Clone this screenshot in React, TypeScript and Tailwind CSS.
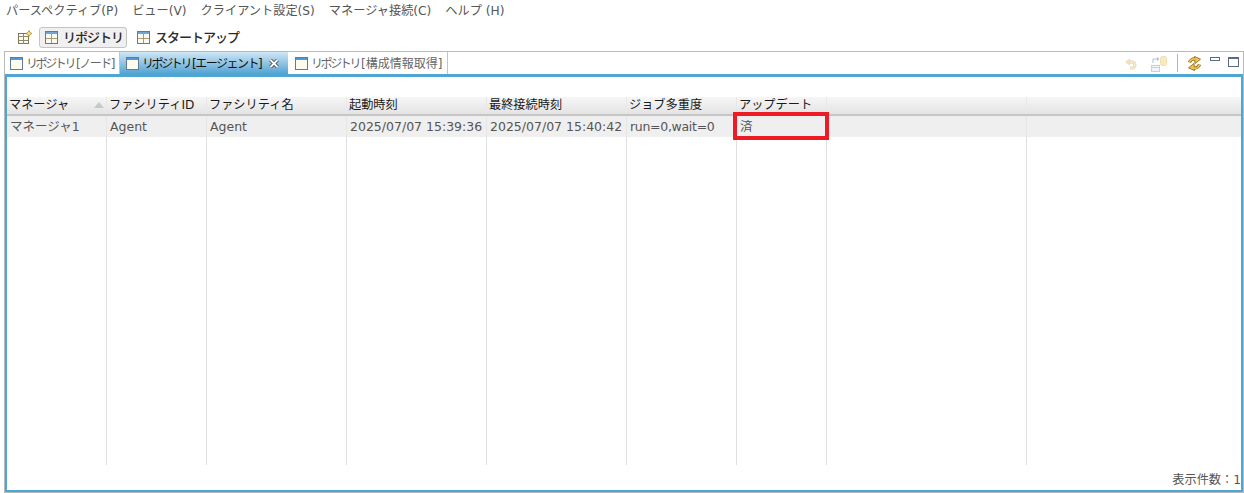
import React from "react";

const font = { fontFamily: '"DejaVu Sans","Noto Sans CJK JP",sans-serif' };

function WinIcon() {
  return (
    <svg width="13" height="13" viewBox="0 0 13 13" className="shrink-0">
      <rect x="0.5" y="0.5" width="12" height="12" fill="#fdfbee" stroke="#5f7a9e" />
      <rect x="1" y="1" width="11" height="2" fill="#4f9ad6" />
    </svg>
  );
}

function GridIcon() {
  return (
    <svg width="13" height="13" viewBox="0 0 13 13" className="shrink-0">
      <rect x="0.5" y="0.5" width="12" height="12" fill="#fbfaf2" stroke="#5b7ba3" />
      <rect x="1" y="1" width="11" height="2" fill="#6fa5d8" />
      <path d="M6.500 3v9M1 7.500h11" stroke="#a89a7c" />
    </svg>
  );
}

function NewPerspective() {
  return (
    <svg width="15" height="15" viewBox="0 0 15 15" className="shrink-0">
      <rect x="0.5" y="3.500" width="10" height="10" fill="#fbf8ec" stroke="#7f7558" />
      <path d="M0.500 6.500h10M0.500 10.500h10M5.500 4v10" stroke="#8f8a72" />
      <path d="M11 0.500l1 2 2 1-2 1-1 2-1-2-2-1 2-1z" fill="#fbe58c" stroke="#b98c20" strokeWidth="0.8" />
    </svg>
  );
}

function Undo() {
  return (
    <svg width="12" height="11" viewBox="0 0 12 11" className="shrink-0 mt-[2px]">
      <path d="M3 3h4a3 3 0 0 1 0 6H5" fill="none" stroke="#e6d3ae" strokeWidth="3" />
      <path d="M3 3h4a3 3 0 0 1 0 6H5" fill="none" stroke="#f8ead0" strokeWidth="1.400" />
      <path d="M0.500 3L4.500 0v6z" fill="#f4e2c0" stroke="#e6d3ae" strokeWidth="0.6" />
    </svg>
  );
}

function DbSwap() {
  return (
    <svg width="16" height="16" viewBox="0 0 16 16" className="shrink-0 mt-[1px]">
      <rect x="9.500" y="0.500" width="6" height="9" rx="2" fill="#fbe9ba" stroke="#eedfb5" />
      <rect x="0.500" y="9.500" width="8" height="6" fill="#f1f5fa" stroke="#c3d2e3" />
      <path d="M1 11.500h7" stroke="#c3d2e3" />
      <path d="M2 7V3h5" fill="none" stroke="#a9c1dc" />
      <path d="M6 1l2.500 2L6 5z" fill="#a9c1dc" />
    </svg>
  );
}

function SyncArrow({ r }: { r?: boolean }) {
  return (
    <g transform={r ? "rotate(180 7.500 7.500)" : undefined}>
      <path d="M2.500 6.500A5 5 0 0 1 8 3" fill="none" stroke="#8f6a1a" strokeWidth="3.200" />
      <path d="M7.500 0.500L13.500 3.200L8 7.500Z" fill="#f6c453" stroke="#8f6a1a" strokeWidth="0.9" strokeLinejoin="round" />
      <path d="M2.500 6.500A5 5 0 0 1 8.500 3" fill="none" stroke="#f6c453" strokeWidth="1.700" />
    </g>
  );
}

function Sync() {
  return (
    <svg width="15" height="15" viewBox="0 0 15 15" className="shrink-0">
      <SyncArrow />
      <SyncArrow r />
    </svg>
  );
}

function Kana({ children, t }: { children: React.ReactNode; t: string }) {
  return <span className={t}>{children}</span>;
}

const cols = [
  { w: "w-[100px]", h: "マネージャ", v: "マネージャ1", sort: true, t: "" },
  { w: "w-[100px]", h: "ファシリティID", v: "Agent", t: "" },
  { w: "w-[140px]", h: "ファシリティ名", v: "Agent", t: "" },
  { w: "w-[140px]", h: "起動時刻", v: "2025/07/07 15:39:36", t: "" },
  { w: "w-[140px]", h: "最終接続時刻", v: "2025/07/07 15:40:42", t: "" },
  { w: "w-[110px]", h: "ジョブ多重度", v: "run=0,wait=0", t: "tracking-[-0.3px]" },
  { w: "w-[90px]", h: "アップデート", v: "済", t: "" },
  { w: "w-[200px]", h: "", v: "", t: "" },
];

function Column({ c }: { c: (typeof cols)[number] }) {
  return (
    <div className={`${c.w} shrink-0 flex flex-col`}>
      <div className="h-[17px] shrink-0 pl-[2px] flex items-center relative bg-gradient-to-b from-[#f6f6f6] to-[#e4e4e4] border-r border-[#e8e8e8] text-[12.2px] text-[#1a1a1a] whitespace-nowrap overflow-hidden">
        {c.h}
        {c.sort && (
          <span className="absolute right-[2px] top-[5px] w-0 h-0 border-l-[5px] border-r-[5px] border-b-[6px] border-l-transparent border-r-transparent border-b-[#c8c8c8]" />
        )}
      </div>
      <div className="h-[2px] shrink-0 bg-[#c6c6c6]" />
      <div className={`h-[21px] shrink-0 pl-[3px] pt-[2px] flex items-center bg-[#efefef] border-r border-[#e6e6e6] text-[12.5px] text-[#555555] whitespace-nowrap overflow-hidden ${c.t}`}>
        {c.v}
      </div>
      <div className="h-[328px] shrink-0 border-r border-[#e0e0e0]" />
    </div>
  );
}

export default function App() {
  return (
    <div style={font} className="w-[1244px] h-[493px] bg-white overflow-hidden flex flex-col text-[12.5px]">
      <div className="h-[22px] shrink-0 flex items-center pl-[6px] gap-[14px] text-[12.2px] text-[#555555]">
        <span>パースペクティブ(P)</span>
        <span>ビュー(V)</span>
        <span>クライアント設定(S)</span>
        <span>マネージャ接続(C)</span>
        <span>ヘルプ (H)</span>
      </div>
      <div className="h-[29px] shrink-0 flex items-center pt-[2px] pl-[18px] text-[13px] font-medium tracking-[-1px] text-[#2a2a2a]">
        <NewPerspective />
        <div className="ml-[6px] h-[21px] w-[88px] pl-[5px] flex items-center gap-[5px] bg-[#f0f0f0] border border-[#c4c4c4] rounded-[3px]">
          <GridIcon />
          <span>リポジトリ</span>
        </div>
        <div className="ml-[10px] flex items-center gap-[5px]">
          <GridIcon />
          <span>スタートアップ</span>
        </div>
      </div>
      <div className="ml-[4px] w-[1240px] h-[442px] flex flex-col bg-[#b8b8b8] pt-[1px] pl-[1px] pr-[1px] pb-[1px]">
        <div className="h-[22px] shrink-0 bg-white flex items-stretch text-[12px]">
          <div className="w-[115px] pl-[5px] flex items-center gap-[3px] text-[#666666] border-r border-[#c4c4c4] whitespace-nowrap">
            <WinIcon />
            <span className="pt-[2px]">
              <Kana t="tracking-[-2.4px]">リポジトリ</Kana>
              <Kana t="ml-[2px] tracking-[-1.5px]">[ノード]</Kana>
            </span>
          </div>
          <div className="w-[168px] pl-[6px] flex items-center gap-[3px] text-[#111111] bg-gradient-to-b from-[#cfe6f5] to-[#4fa3d2] whitespace-nowrap">
            <WinIcon />
            <span className="pt-[2px]">
              <Kana t="tracking-[-2.4px]">リポジトリ</Kana>
              <Kana t="ml-[2px] tracking-[-1.5px]">[エージェント]</Kana>
            </span>
            <svg width="12" height="11" viewBox="0 0 12 11" className="ml-[4px] shrink-0">
              <path d="M2.500 2l7 7M9.500 2l-7 7" stroke="#4a4a4a" strokeWidth="3.600" />
              <path d="M2.500 2l7 7M9.500 2l-7 7" stroke="#ffffff" strokeWidth="1.800" />
            </svg>
          </div>
          <div className="w-[160px] pl-[7px] flex items-center gap-[3px] text-[#666666] border-r border-[#c4c4c4] whitespace-nowrap">
            <WinIcon />
            <span className="pt-[2px]">
              <Kana t="tracking-[-2.4px]">リポジトリ</Kana>
              <Kana t="ml-[2px]">[構成情報取得]</Kana>
            </span>
          </div>
          <div className="flex-1 flex items-center justify-end pr-[4px]">
            <Undo />
            <div className="w-[14px]" />
            <DbSwap />
            <div className="w-[1px] h-[18px] bg-[#b4b4b4] ml-[10px] mr-[9px]" />
            <Sync />
            <div className="w-[10px] h-[4px] border border-[#5a6a8c] ml-[8px] mb-[8px]" />
            <div className="w-[11px] h-[10px] border border-[#5a6a8c] border-t-[2px] ml-[8px] mb-[2px]" />
          </div>
        </div>
        <div className="h-[418px] shrink-0 bg-white border-[#4ea6d2] border-t-[3px] border-l-[2px] border-r-[2px] border-b-[2px] flex flex-col relative">
          <div className="h-[20px] shrink-0" />
          <div className="flex">
            {cols.map((c, i) => (
              <Column key={i} c={c} />
            ))}
            <div className="flex-1 flex flex-col">
              <div className="h-[17px] bg-gradient-to-b from-[#f6f6f6] to-[#e4e4e4]" />
              <div className="h-[2px] bg-[#c6c6c6]" />
              <div className="h-[21px] bg-[#efefef]" />
            </div>
          </div>
          <div className="flex-1 flex items-end justify-end pb-[1px] text-[12.2px] text-[#555555]">
            表示件数：1
          </div>
          <div className="absolute left-[726px] top-[35px] w-[96px] h-[28px] border-[4px] border-[#ed1c24]" />
        </div>
      </div>
    </div>
  );
}
